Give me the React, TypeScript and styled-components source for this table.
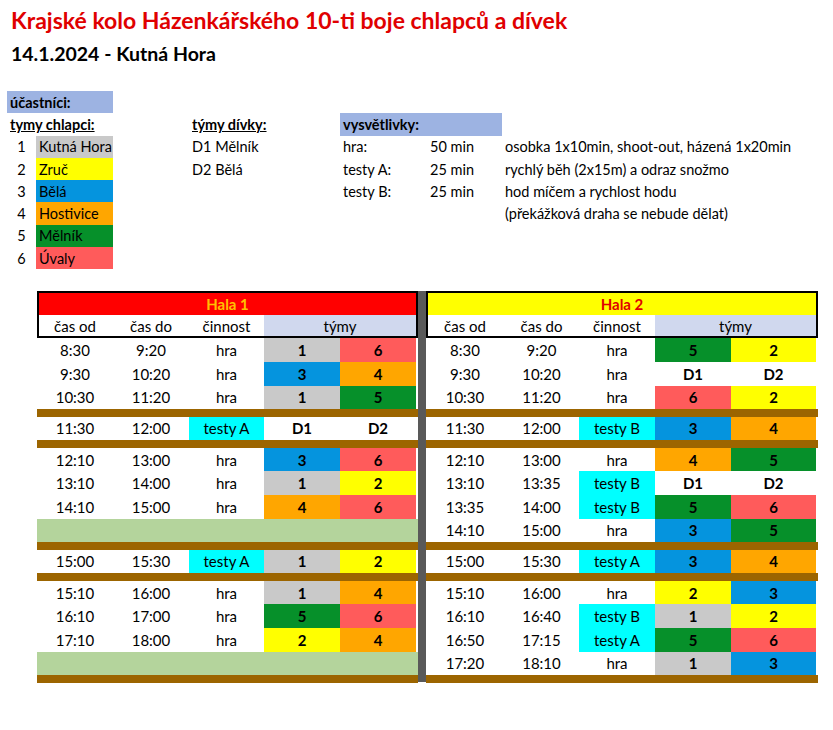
import React from 'react';
import styled, { createGlobalStyle } from 'styled-components';

const GlobalStyle = createGlobalStyle`
  body {
    margin: 0;
    background: #fff;
    font-family: Lato, 'Open Sans', sans-serif;
    color: #000;
  }
`;

const Page = styled.div`
  width: 833px;
  height: 730px;
  padding-top: 8px;
  box-sizing: border-box;
  overflow: hidden;
`;

const Title = styled.h1`
  margin: 0 0 0 11px;
  font-size: 23px;
  line-height: 24px;
  font-weight: 700;
  color: #e00000;
  white-space: nowrap;
`;

const Subtitle = styled.h2`
  margin: 11px 0 0 11px;
  font-size: 19.5px;
  line-height: 22px;
  font-weight: 700;
`;

const Info = styled.div`
  margin: 26px 0 0 7px;
  display: grid;
  grid-template-columns: 29px 77px 76px 151px 87px 75px 1fr;
  grid-auto-rows: 22.3px;
  font-size: 14.5px;
`;

const InfoCell = styled.div<{ $col: string; $row: number; $bg?: string; $center?: boolean }>`
  grid-column: ${({ $col }) => $col};
  grid-row: ${({ $row }) => $row};
  background: ${({ $bg }) => $bg || 'transparent'};
  display: flex;
  align-items: center;
  justify-content: ${({ $center }) => ($center ? 'center' : 'flex-start')};
  padding-left: ${({ $center }) => ($center ? '0' : '3px')};
  white-space: nowrap;
`;

const Label = styled.span<{ $underline?: boolean }>`
  font-weight: 700;
  text-decoration: ${({ $underline }) => ($underline ? 'underline' : 'none')};
`;

const Schedule = styled.div`
  margin: 22px 0 0 37px;
  display: flex;
  align-items: stretch;
`;

const Divider = styled.div`
  width: 8px;
  background: #595959;
  margin-bottom: 1px;
`;

const Hall = styled.div<{ $cols: string }>`
  display: flex;
  flex-direction: column;
  --cols: ${({ $cols }) => $cols};
`;

const HeadBlock = styled.div`
  border: 2px solid #000;
`;

const HallName = styled.div<{ $bg: string; $fg: string }>`
  height: 22px;
  background: ${({ $bg }) => $bg};
  color: ${({ $fg }) => $fg};
  font-weight: 700;
  font-size: 15px;
  display: flex;
  align-items: center;
  justify-content: center;
`;

const Row = styled.div`
  display: grid;
  grid-template-columns: var(--cols);
  height: 23.6px;
  font-size: 15px;
`;

const HeadRow = styled(Row)`
  height: 21px;
  font-weight: 700;
  margin-left: -2px;
`;

const Cell = styled.div<{ $bg?: string; $bold?: boolean; $span?: number }>`
  grid-column: span ${({ $span }) => $span || 1};
  background: ${({ $bg }) => $bg || 'transparent'};
  font-weight: ${({ $bold }) => ($bold ? 700 : 400)};
  display: flex;
  align-items: center;
  justify-content: center;
  white-space: nowrap;
`;

const Separator = styled.div`
  height: 7.5px;
  background: #9c6500;
`;

const Blank = styled.div`
  height: 23.6px;
  background: #b4d49c;
`;

const colors: Record<string, string> = {
  '1': '#c9c9c9',
  '2': '#ffff00',
  '3': '#0594de',
  '4': '#ffa600',
  '5': '#06902a',
  '6': '#ff5b5b',
};

const CYAN = '#00ffff';
const BLUE_LABEL = '#9db3e2';

type Game = { from: string; to: string; act: string; a: string; b: string };
type Entry = Game | 'sep' | 'blank';

const g = (from: string, to: string, act: string, a: string, b: string): Game => ({ from, to, act, a, b });

const hall1: Entry[] = [
  g('8:30', '9:20', 'hra', '1', '6'),
  g('9:30', '10:20', 'hra', '3', '4'),
  g('10:30', '11:20', 'hra', '1', '5'),
  'sep',
  g('11:30', '12:00', 'testy A', 'D1', 'D2'),
  'sep',
  g('12:10', '13:00', 'hra', '3', '6'),
  g('13:10', '14:00', 'hra', '1', '2'),
  g('14:10', '15:00', 'hra', '4', '6'),
  'blank',
  'sep',
  g('15:00', '15:30', 'testy A', '1', '2'),
  'sep',
  g('15:10', '16:00', 'hra', '1', '4'),
  g('16:10', '17:00', 'hra', '5', '6'),
  g('17:10', '18:00', 'hra', '2', '4'),
  'blank',
  'sep',
];

const hall2: Entry[] = [
  g('8:30', '9:20', 'hra', '5', '2'),
  g('9:30', '10:20', 'hra', 'D1', 'D2'),
  g('10:30', '11:20', 'hra', '6', '2'),
  'sep',
  g('11:30', '12:00', 'testy B', '3', '4'),
  'sep',
  g('12:10', '13:00', 'hra', '4', '5'),
  g('13:10', '13:35', 'testy B', 'D1', 'D2'),
  g('13:35', '14:00', 'testy B', '5', '6'),
  g('14:10', '15:00', 'hra', '3', '5'),
  'sep',
  g('15:00', '15:30', 'testy A', '3', '4'),
  'sep',
  g('15:10', '16:00', 'hra', '2', '3'),
  g('16:10', '16:40', 'testy B', '1', '2'),
  g('16:50', '17:15', 'testy A', '5', '6'),
  g('17:20', '18:10', 'hra', '1', '3'),
  'sep',
];

const HallTable = ({ name, bg, fg, cols, rows }: { name: string; bg: string; fg: string; cols: string; rows: Entry[] }) => (
  <Hall $cols={cols}>
    <HeadBlock>
      <HallName $bg={bg} $fg={fg}>{name}</HallName>
      <HeadRow>
        <Cell>čas od</Cell>
        <Cell>čas do</Cell>
        <Cell>činnost</Cell>
        <Cell $span={2} $bg="#d0d8ee">týmy</Cell>
      </HeadRow>
    </HeadBlock>
    {rows.map((r, i) => {
      if (r === 'sep') return <Separator key={i} />;
      if (r === 'blank') return <Blank key={i} />;
      return (
        <Row key={i}>
          <Cell>{r.from}</Cell>
          <Cell>{r.to}</Cell>
          <Cell $bg={r.act.startsWith('testy') ? CYAN : undefined}>{r.act}</Cell>
          <Cell $bold $bg={colors[r.a]}>{r.a}</Cell>
          <Cell $bold $bg={colors[r.b]}>{r.b}</Cell>
        </Row>
      );
    })}
  </Hall>
);

const boys = ['Kutná Hora', 'Zruč', 'Bělá', 'Hostivice', 'Mělník', 'Úvaly'];

const legend = [
  ['hra:', '50 min', 'osobka 1x10min, shoot-out, házená 1x20min'],
  ['testy A:', '25 min', 'rychlý běh (2x15m) a odraz snožmo'],
  ['testy B:', '25 min', 'hod míčem a rychlost hodu'],
  ['', '', '(překážková draha se nebude dělat)'],
];

export default function App() {
  return (
    <Page>
      <GlobalStyle />
      <Title>Krajské kolo Házenkářského 10-ti boje chlapců a dívek</Title>
      <Subtitle>14.1.2024 - Kutná Hora</Subtitle>

      <Info>
        <InfoCell $col="1 / 3" $row={1} $bg={BLUE_LABEL}>
          <Label>účastníci:</Label>
        </InfoCell>
        <InfoCell $col="1 / 3" $row={2}>
          <Label $underline>tymy chlapci:</Label>
        </InfoCell>
        <InfoCell $col="4" $row={2}>
          <Label $underline>týmy dívky:</Label>
        </InfoCell>
        <InfoCell $col="5 / 7" $row={2} $bg={BLUE_LABEL}>
          <Label>vysvětlivky:</Label>
        </InfoCell>
        {boys.map((name, i) => (
          <React.Fragment key={name}>
            <InfoCell $col="1" $row={i + 3} $center>{i + 1}</InfoCell>
            <InfoCell $col="2" $row={i + 3} $bg={colors[String(i + 1)]}>{name}</InfoCell>
          </React.Fragment>
        ))}
        <InfoCell $col="4" $row={3}>D1 Mělník</InfoCell>
        <InfoCell $col="4" $row={4}>D2 Bělá</InfoCell>
        {legend.map(([k, t, d], i) => (
          <React.Fragment key={i}>
            <InfoCell $col="5" $row={i + 3}>{k}</InfoCell>
            <InfoCell $col="6" $row={i + 3}>{t}</InfoCell>
            <InfoCell $col="7" $row={i + 3}>{d}</InfoCell>
          </React.Fragment>
        ))}
      </Info>

      <Schedule>
        <HallTable name="Hala 1" bg="#ff0000" fg="#ffc000" cols="76px 76px 75px 76px 76px" rows={hall1} />
        <Divider />
        <HallTable name="Hala 2" bg="#ffff00" fg="#e00000" cols="78px 75px 76px 76px 85px" rows={hall2} />
      </Schedule>
    </Page>
  );
}
